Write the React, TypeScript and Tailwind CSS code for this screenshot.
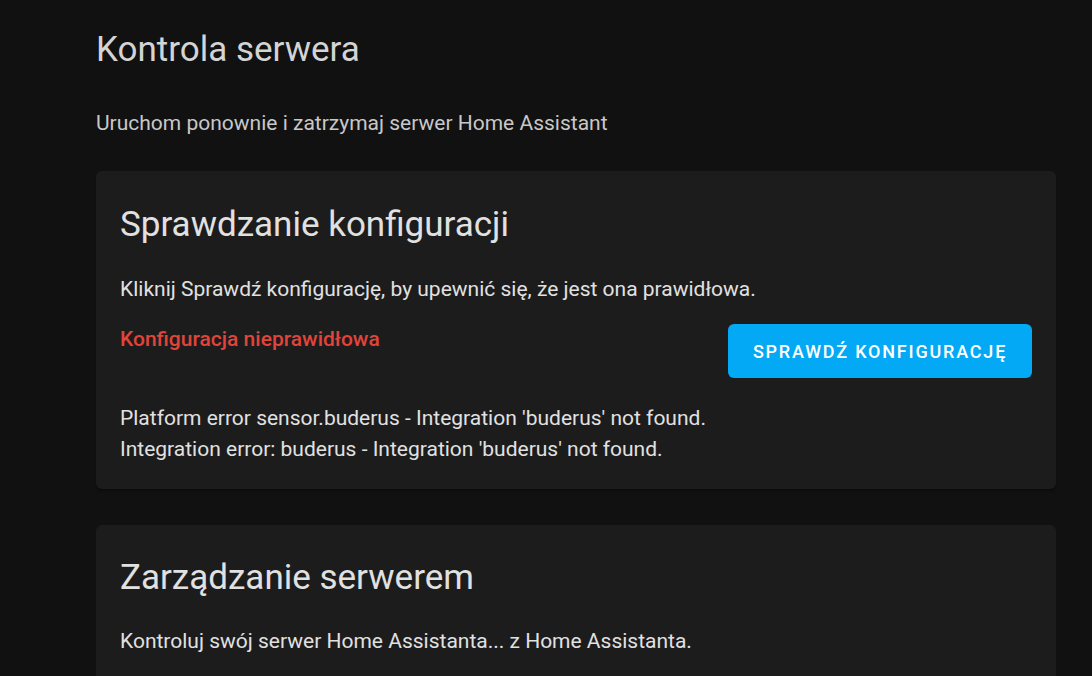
export default function App() {
  return (
    <div className="min-h-screen bg-[#111111] font-['Roboto',sans-serif] text-[#e1e1e1]">
      <div className="pl-[96px] pr-[36px] pt-[30px]">
        <h1 className="text-[35px] leading-[40px] text-[#d4d4d4]">Kontrola serwera</h1>
        <p className="mt-[39px] text-[21px] leading-[28px] text-[#c8c8c8]">
          Uruchom ponownie i zatrzymaj serwer Home Assistant
        </p>

        {/* Config check card */}
        <section className="mt-[34px] rounded-md bg-[#1c1c1c] px-6 pt-[30px] pb-[24px] shadow-[0_2px_2px_rgba(0,0,0,0.3)]">
          <h2 className="text-[35px] leading-[48px] text-[#e1e1e1]">Sprawdzanie konfiguracji</h2>
          <p className="mt-[25px] text-[21px] leading-[30px]">
            Kliknij Sprawdź konfigurację, by upewnić się, że jest ona prawidłowa.
          </p>
          <div className="mt-[20px] flex items-start justify-between">
            <div className="text-[21px] font-medium leading-[30px] text-[#e0443a]">
              Konfiguracja nieprawidłowa
            </div>
            <button className="h-[54px] w-[304px] rounded-[6px] bg-[#03a9f4] text-[18px] font-medium tracking-[0.1em] text-white">
              SPRAWDŹ KONFIGURACJĘ
            </button>
          </div>
          <div className="mt-[25px] text-[21px] leading-[31px]">
            <div>Platform error sensor.buderus - Integration 'buderus' not found.</div>
            <div>Integration error: buderus - Integration 'buderus' not found.</div>
          </div>
        </section>

        {/* Server management card */}
        <section className="mt-[36px] rounded-md bg-[#1c1c1c] px-6 pt-[29px] pb-[40px]">
          <h2 className="text-[35px] leading-[48px] text-[#e1e1e1]">Zarządzanie serwerem</h2>
          <p className="mt-[24px] text-[21px] leading-[30px]">
            Kontroluj swój serwer Home Assistanta... z Home Assistanta.
          </p>
        </section>
      </div>
    </div>
  );
}
